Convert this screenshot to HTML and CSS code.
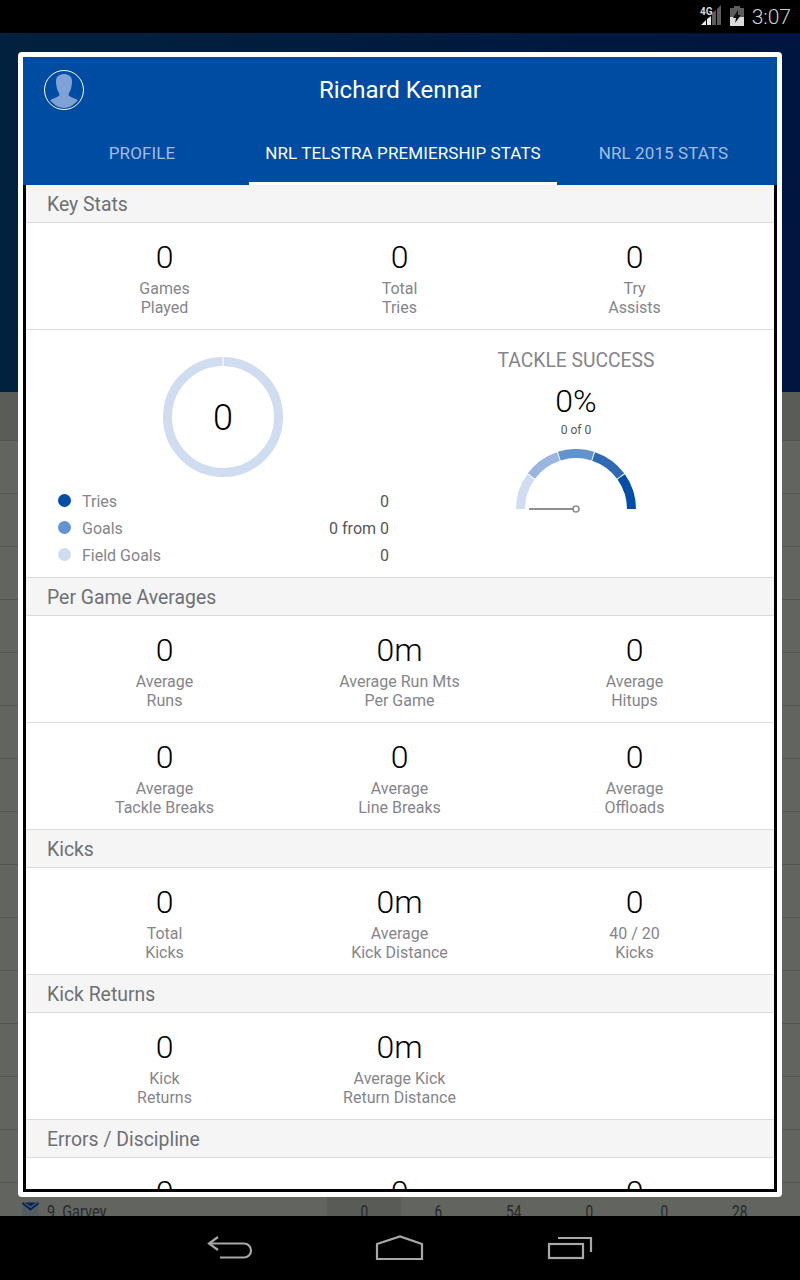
FILE: index.html
```html
<!DOCTYPE html>
<html lang="en">
<head>
    <meta charset="UTF-8">
    <meta name="viewport" content="width=device-width, initial-scale=1.0">
    <title>Richard Kennar</title>
    <link rel="stylesheet" href="styles.css">
</head>
<body>
    <div class="status-bar">
        <svg class="status-net" width="24" height="22" viewBox="0 0 24 22">
            <polygon points="1,20 6,15 6,20" fill="#e8e8e8"/>
            <polygon points="7,14 11,11 11,20 7,20" fill="#e8e8e8"/>
            <polygon points="12,8 16,5 16,20 12,20" fill="#5c5c5c"/>
            <polygon points="17,4 21,0 21,20 17,20" fill="#5c5c5c"/>
            <text x="0" y="10" class="net-label">4G</text>
        </svg>
        <svg class="status-battery" width="14" height="20" viewBox="0 0 14 20">
            <rect x="4" y="0" width="6" height="2" fill="#5c5c5c"/>
            <rect x="0" y="2" width="14" height="18" fill="#5c5c5c"/>
            <rect x="0" y="11" width="14" height="9" fill="#dcdcdc"/>
            <polygon points="8,4 3,12 6,12 5,17 11,9 8,9" fill="#111"/>
        </svg>
        <span class="status-time">3:07</span>
    </div>

    <div class="backdrop">
        <div class="navy"></div>
        <div class="rows">
            <div class="row row-top"></div>
            <div class="row"></div><div class="row"></div><div class="row"></div>
            <div class="row"></div><div class="row"></div><div class="row"></div>
            <div class="row"></div><div class="row"></div><div class="row"></div>
            <div class="row"></div><div class="row"></div><div class="row"></div>
            <div class="row"></div><div class="row"></div>
            <div class="row row-player">
                <div class="player">
                    <svg class="chevron" width="17" height="14" viewBox="0 0 17 14">
                        <rect width="17" height="14" fill="#555d60"/>
                        <path d="M3 0.5h11L8.5 4.5z" fill="#08285a"/>
                        <path d="M0.5 1L8.5 7.5L16.5 1" fill="none" stroke="#08285a" stroke-width="2"/>
                    </svg>
                    <span class="narrow name">9&nbsp; Garvey</span>
                </div>
                <span class="cell cell-shade"><span class="narrow">0</span></span>
                <span class="cell"><span class="narrow">6</span></span>
                <span class="cell"><span class="narrow">54</span></span>
                <span class="cell"><span class="narrow">0</span></span>
                <span class="cell"><span class="narrow">0</span></span>
                <span class="cell"><span class="narrow">28</span></span>
            </div>
        </div>
    </div>

    <div class="nav-bar">
        <svg width="46" height="26" viewBox="0 0 46 26" fill="none" stroke="#a8a8a8" stroke-width="2.2">
            <path d="M11 2L2 8.5L11 15"/>
            <path d="M2 8.5H37a7 7 0 0 1 0 14H13"/>
        </svg>
        <svg width="50" height="26" viewBox="0 0 50 26" fill="none" stroke="#a8a8a8" stroke-width="2.2">
            <path d="M2 9L25 1.5L47 9V24H2Z"/>
        </svg>
        <svg width="46" height="24" viewBox="0 0 46 24" fill="none" stroke="#a8a8a8" stroke-width="2.2">
            <rect x="2" y="8" width="34" height="14"/>
            <path d="M11 2H44V16"/>
        </svg>
    </div>

    <div class="dialog">
        <div class="dialog-head">
            <div class="title-row">
                <svg class="avatar" width="40" height="40" viewBox="0 0 40 40">
                    <circle cx="20" cy="20" r="19.5" fill="none" stroke="#fff" stroke-width="1"/>
                    <path d="M12 11c0-5 4-7 8-7s8 2 8 7c0 5-1 9-3 12-1 2 0 3 2 4l7 3c-4 5-9 8-14 8s-10-3-14-8l7-3c2-1 3-2 2-4-2-3-3-7-3-12z" fill="#7fa1d6"/>
                </svg>
                <h1>Richard Kennar</h1>
            </div>
            <div class="tabs">
                <div class="tab tab-first">PROFILE</div>
                <div class="tab tab-active">NRL TELSTRA PREMIERSHIP STATS</div>
                <div class="tab tab-last">NRL 2015 STATS</div>
            </div>
        </div>

        <div class="dialog-body">
            <h2>Key Stats</h2>
            <div class="stats">
                <div class="stat"><b>0</b><span>Games<br>Played</span></div>
                <div class="stat"><b>0</b><span>Total<br>Tries</span></div>
                <div class="stat"><b>0</b><span>Try<br>Assists</span></div>
            </div>

            <div class="charts">
                <div class="points">
                    <div class="donut">
                        <svg width="120" height="120" viewBox="0 0 120 120">
                            <circle cx="60" cy="60" r="55.5" fill="none" stroke="#d0dcef" stroke-width="9"/>
                            <rect x="59.5" y="0" width="1" height="10" fill="#fff"/>
                        </svg>
                        <b>0</b>
                    </div>
                    <div class="legend">
                        <div class="legend-row"><i class="dot dot-tries"></i><span>Tries</span><em>0</em></div>
                        <div class="legend-row"><i class="dot dot-goals"></i><span>Goals</span><em>0 from 0</em></div>
                        <div class="legend-row"><i class="dot dot-field"></i><span>Field Goals</span><em>0</em></div>
                    </div>
                </div>
                <div class="tackle">
                    <h3>TACKLE SUCCESS</h3>
                    <b>0%</b>
                    <small>0 of 0</small>
                    <svg class="gauge" width="120" height="66" viewBox="0 0 120 66" fill="none" stroke-width="9">
                        <path d="M4.5 60A55.5 55.5 0 0 1 14.8 27.8" stroke="#d0dcef"/>
                        <path d="M15.4 27A55.5 55.5 0 0 1 42.4 7.4" stroke="#9ab5df"/>
                        <path d="M43.3 7.1A55.5 55.5 0 0 1 76.7 7.1" stroke="#6194cc"/>
                        <path d="M77.6 7.4A55.5 55.5 0 0 1 104.6 27" stroke="#2f6ab5"/>
                        <path d="M105.2 27.8A55.5 55.5 0 0 1 115.5 60" stroke="#004ea8"/>
                        <path d="M13 60H57" stroke="#8e8e96" stroke-width="2"/>
                        <circle cx="60" cy="60" r="3" stroke="#8e8e96" stroke-width="1.6" fill="#fff"/>
                    </svg>
                </div>
            </div>

            <h2>Per Game Averages</h2>
            <div class="stats">
                <div class="stat"><b>0</b><span>Average<br>Runs</span></div>
                <div class="stat"><b>0m</b><span>Average Run Mts<br>Per Game</span></div>
                <div class="stat"><b>0</b><span>Average<br>Hitups</span></div>
            </div>
            <div class="stats">
                <div class="stat"><b>0</b><span>Average<br>Tackle Breaks</span></div>
                <div class="stat"><b>0</b><span>Average<br>Line Breaks</span></div>
                <div class="stat"><b>0</b><span>Average<br>Offloads</span></div>
            </div>

            <h2>Kicks</h2>
            <div class="stats">
                <div class="stat"><b>0</b><span>Total<br>Kicks</span></div>
                <div class="stat"><b>0m</b><span>Average<br>Kick Distance</span></div>
                <div class="stat"><b>0</b><span>40 / 20<br>Kicks</span></div>
            </div>

            <h2>Kick Returns</h2>
            <div class="stats">
                <div class="stat"><b>0</b><span>Kick<br>Returns</span></div>
                <div class="stat"><b>0m</b><span>Average Kick<br>Return Distance</span></div>
            </div>

            <h2>Errors / Discipline</h2>
            <div class="stats">
                <div class="stat"><b>0</b></div>
                <div class="stat"><b>0</b></div>
                <div class="stat"><b>0</b></div>
            </div>
        </div>
    </div>
</body>
</html>
```

FILE: styles.css
```css
* {
    box-sizing: border-box;
}
html, body {
    margin: 0;
    height: 1280px;
    overflow: hidden;
}
body {
    display: flex;
    flex-direction: column;
    font-family: Roboto, Arial, sans-serif;
    background-color: #000;
}

/* android chrome */
.status-bar {
    height: 33px;
    flex: none;
    background-color: #000;
    display: flex;
    justify-content: flex-end;
    align-items: center;
    padding-right: 9px;
}
.status-net {
    margin-right: 6px;
    margin-top: -1px;
}
.net-label {
    font-size: 10px;
    font-weight: bold;
    fill: #d8d8d8;
}
.status-battery {
    margin-right: 8px;
    margin-top: -2px;
}
.status-time {
    font-size: 21px;
    font-weight: 300;
    color: #d0d0d0;
}
.nav-bar {
    height: 64px;
    flex: none;
    background-color: #000;
    display: flex;
    justify-content: center;
    align-items: center;
    gap: 122px;
    padding-bottom: 1px;
}

/* page behind the dialog */
.backdrop {
    height: 1183px;
    flex: none;
    overflow: hidden;
}
.navy {
    height: 359px;
    background: linear-gradient(90deg, #01213e, #00153f);
}
.rows {
    height: 824px;
    background-color: #62645f;
}
.row {
    height: 53px;
    border-bottom: 1px solid #535550;
}
.row-top {
    height: 49px;
    background-color: #5a5c57;
}
.row-player {
    display: flex;
    border-bottom: none;
    font-size: 19px;
    line-height: 22px;
    color: #26282a;
}
.player {
    width: 327px;
    padding: 19px 0 0 22px;
    display: flex;
    gap: 8px;
}
.chevron {
    display: block;
}
.narrow {
    display: inline-block;
    transform: scaleX(0.72);
}
.name {
    transform: scaleX(0.76);
    transform-origin: left;
    white-space: nowrap;
    margin-top: -1px;
}
.cell {
    width: 75.2px;
    padding-top: 18px;
    text-align: center;
}
.cell-shade {
    background-color: #595b57;
    width: 74px;
}

/* dialog */
.dialog {
    position: absolute;
    top: 52px;
    left: 18px;
    width: 764px;
    height: 1145px;
    padding: 5px;
    background-color: #fff;
    border-radius: 4px;
    display: flex;
    flex-direction: column;
}
.dialog-head {
    height: 128px;
    flex: none;
    background-color: #004ca3;
    color: #fff;
}
.title-row {
    height: 73px;
    position: relative;
    display: flex;
    justify-content: center;
    align-items: center;
    padding-bottom: 8px;
}
.avatar {
    position: absolute;
    left: 21px;
    top: 13px;
}
h1 {
    margin: 0;
    font-size: 24px;
    font-weight: 400;
}
.tabs {
    height: 55px;
    display: flex;
    font-size: 17px;
    letter-spacing: 0.1px;
}
.tab {
    display: flex;
    justify-content: center;
    align-items: center;
    padding-bottom: 10px;
    color: #a3bde2;
}
.tab-first {
    width: 226px;
    padding-left: 12px;
}
.tab-active {
    width: 308px;
    color: #fff;
    padding-bottom: 7px;
    border-bottom: 3px solid #fff;
}
.tab-last {
    width: 220px;
    padding-right: 7px;
}
.dialog-body {
    flex: 1;
    min-height: 0;
    overflow: hidden;
    background-color: #fff;
    border: solid #000;
    border-width: 0 3px 3px;
}
h2 {
    margin: 0;
    height: 38px;
    padding: 2px 0 0 21px;
    display: flex;
    align-items: center;
    font-size: 19.4px;
    font-weight: 400;
    color: #6d7075;
    background-color: #f5f5f5;
    border-bottom: 1px solid #dcdcdc;
}
.stats {
    height: 107px;
    padding: 16px 21px 0;
    display: grid;
    grid-template-columns: repeat(3, 235px);
    border-bottom: 1px solid #dcdcdc;
}
.stat {
    display: flex;
    flex-direction: column;
    align-items: center;
    text-align: center;
}
.stat b {
    font-size: 32px;
    line-height: 36px;
    font-weight: 300;
    color: #000;
}
.stat span {
    margin-top: 4px;
    font-size: 16px;
    line-height: 19px;
    color: #85858b;
}

/* charts row */
.charts {
    height: 248px;
    display: flex;
    border-bottom: 1px solid #dcdcdc;
}
.points {
    width: 396px;
    padding: 27px 0 0 32px;
}
.donut {
    position: relative;
    width: 120px;
    height: 120px;
    margin-left: 105px;
}
.donut svg {
    display: block;
}
.donut b {
    position: absolute;
    inset: 0;
    display: flex;
    justify-content: center;
    align-items: center;
    padding-top: 1px;
    font-size: 36px;
    font-weight: 300;
    color: #000;
}
.legend {
    margin-top: 11px;
    width: 331px;
}
.legend-row {
    height: 27px;
    display: flex;
    align-items: center;
    font-size: 16px;
}
.dot {
    width: 13px;
    height: 13px;
    border-radius: 50%;
    margin-right: 11px;
    margin-top: -2px;
}
.dot-tries {
    background-color: #004ea8;
}
.dot-goals {
    background-color: #6194d0;
}
.dot-field {
    background-color: #d0dcef;
}
.legend-row span {
    flex: 1;
    color: #85858b;
}
.legend-row em {
    font-style: normal;
    color: #55575a;
}
.tackle {
    flex: 1;
    display: flex;
    flex-direction: column;
    align-items: center;
    padding: 20px 44px 0 0;
}
.tackle h3 {
    margin: 0;
    font-size: 19.3px;
    line-height: 22px;
    font-weight: 400;
    color: #85858b;
}
.tackle b {
    margin-top: 11px;
    font-size: 32px;
    line-height: 36px;
    font-weight: 300;
    color: #000;
}
.tackle small {
    margin-top: 3px;
    font-size: 12px;
    line-height: 16px;
    color: #55575a;
}
.gauge {
    display: block;
    margin-top: 11px;
}
```
